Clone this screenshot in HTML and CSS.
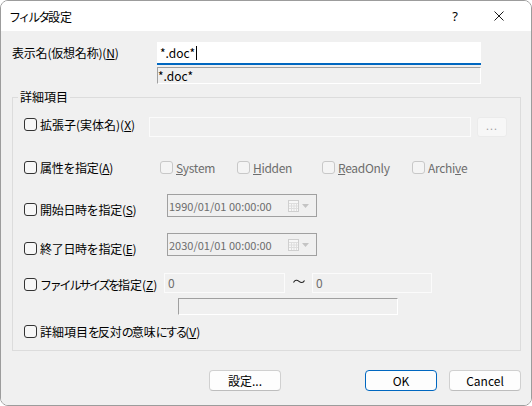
FILE: index.html
```html
<!DOCTYPE html>
<html lang="ja">
<head>
<meta charset="utf-8">
<title>フィルタ設定</title>
<link rel="stylesheet" href="styles.css">
</head>
<body>
<div class="win">
  <div class="titlebar">
    <span class="title"><span class="kana">フィルタ</span>設定</span>
    <span class="help">?</span>
    <span class="close"><svg width="10" height="10" viewBox="0 0 10 10"><path d="M0.5 0.5L9.5 9.5M9.5 0.5L0.5 9.5" stroke="#1a1a1a" stroke-width="1" fill="none"/></svg></span>
  </div>
  <div class="client">
    <div class="name-row">
      <div class="name-label">表示名(仮想名称)(<u>N</u>)</div>
      <div class="name-fields">
        <div class="name-input">*.doc*<span class="caret"></span></div>
        <div class="name-preview">*.doc*</div>
      </div>
    </div>

    <div class="group">
      <div class="legend">詳細項目</div>
      <div class="rows">
        <div class="row row1">
          <div class="cell c-ext"><span class="chk"><span class="box"></span><span>拡張子(実体名)(<u>X</u>)</span></span></div>
          <div class="field f-ext"></div>
          <div class="browse">...</div>
        </div>

        <div class="row row2">
          <div class="cell c-attr"><span class="chk"><span class="box"></span><span class="tight-s">属性を指定(<u>A</u>)</span></span></div>
          <span class="chk dis w-sys"><span class="box"></span><span><u>S</u>ystem</span></span>
          <span class="chk dis w-hid"><span class="box"></span><span><u>H</u>idden</span></span>
          <span class="chk dis w-ro"><span class="box"></span><span><u>R</u>eadOnly</span></span>
          <span class="chk dis"><span class="box"></span><span>Archi<u>v</u>e</span></span>
        </div>

        <div class="row row3">
          <div class="cell c-date"><span class="chk"><span class="box"></span><span class="tight-s">開始日時を指定(<u>S</u>)</span></span></div>
          <div class="date">
            <span class="date-text">1990/01/01 00:00:00</span>
            <svg class="cal" width="11" height="12" viewBox="0 0 11 12"><rect x="0.5" y="0.5" width="10" height="11" fill="#f7f7f7" stroke="#cfcfcf"/><path d="M1 3.5H10M1 6H10M1 8.5H10M3.5 4V11M6 4V11M8.5 4V11" stroke="#dedede" stroke-width="1"/></svg>
            <svg class="arr" width="7" height="4" viewBox="0 0 7 4"><path d="M0 0H7L3.5 4Z" fill="#c4c4c4"/></svg>
          </div>
        </div>

        <div class="row row4">
          <div class="cell c-date"><span class="chk"><span class="box"></span><span class="tight-s">終了日時を指定(<u>E</u>)</span></span></div>
          <div class="date">
            <span class="date-text">2030/01/01 00:00:00</span>
            <svg class="cal" width="11" height="12" viewBox="0 0 11 12"><rect x="0.5" y="0.5" width="10" height="11" fill="#f7f7f7" stroke="#cfcfcf"/><path d="M1 3.5H10M1 6H10M1 8.5H10M3.5 4V11M6 4V11M8.5 4V11" stroke="#dedede" stroke-width="1"/></svg>
            <svg class="arr" width="7" height="4" viewBox="0 0 7 4"><path d="M0 0H7L3.5 4Z" fill="#c4c4c4"/></svg>
          </div>
        </div>

        <div class="row row5">
          <div class="cell c-size"><span class="chk"><span class="box"></span><span><span class="kana">ファイルサイズを</span>指定(<u>Z</u>)</span></span></div>
          <div class="field f-size1">0</div>
          <div class="tilde"><svg width="12" height="5" viewBox="0 0 12 5"><path d="M0.5 3.5C2 0.8 4 0.6 6 2.3S10 4.2 11.5 1.5" stroke="#222" stroke-width="1.1" fill="none"/></svg></div>
          <div class="field f-size2">0</div>
        </div>
        <div class="row row5b">
          <div class="sunken"></div>
        </div>

        <div class="row row6">
          <span class="chk"><span class="box"></span><span>詳細項目<span class="kana">を</span>反対<span class="kana">の</span>意味<span class="kana">にする</span>(<u>V</u>)</span></span>
        </div>
      </div>
    </div>

    <div class="buttons">
      <div class="btn">設定...</div>
      <div class="btn btn-ok">OK</div>
      <div class="btn">Cancel</div>
    </div>
  </div>
</div>
</body>
</html>
```
FILE: styles.css
```css
html, body {
  margin: 0;
  padding: 0;
  background: #ffffff;
}
body {
  font-family: "Noto Sans CJK JP", "Noto Sans", sans-serif;
  font-size: 12px;
  color: #000;
}
u {
  text-decoration: underline;
  text-underline-offset: 1px;
}
.kana {
  letter-spacing: -2.2px;
}
.tight-s {
  letter-spacing: -0.3px;
}
.win {
  width: 532px;
  height: 406px;
  box-sizing: border-box;
  border: 1px solid #9c9c9c;
  border-radius: 8px;
  overflow: hidden;
  display: flex;
  flex-direction: column;
}
.titlebar {
  flex: none;
  height: 30px;
  background: #fff;
  display: flex;
  align-items: center;
}
.title {
  padding-left: 8px;
  font-size: 12px;
}
.help {
  margin-left: auto;
  width: 44px;
  text-align: center;
  font-family: "Noto Sans", sans-serif;
  font-size: 13px;
}
.close {
  width: 44px;
  margin-right: 10px;
  display: flex;
  justify-content: center;
}
.client {
  flex: 1;
  background: #f0f0f0;
  padding: 11px 10px 0 11px;
}
.name-row {
  display: flex;
}
.name-label {
  width: 145px;
  line-height: 21px;
  letter-spacing: -0.2px;
}
.name-fields {
  width: 324px;
}
.name-input {
  height: 23px;
  box-sizing: border-box;
  background: #fff;
  border-bottom: 2px solid #0067c0;
  padding-left: 3px;
  display: flex;
  align-items: center;
}
.caret {
  width: 1px;
  height: 14px;
  background: #000;
  margin-left: 1px;
}
.name-preview {
  margin-top: 2px;
  height: 17px;
  box-sizing: border-box;
  border-top: 1px solid #a0a0a0;
  border-left: 1px solid #a0a0a0;
  border-right: 1px solid #fff;
  border-bottom: 1px solid #fff;
  line-height: 15px;
}
.group {
  margin-top: 13px;
  border: 1px solid #dcdcdc;
  padding-bottom: 12px;
}
.legend {
  margin: -8px 0 0 5px;
  padding: 0 2px;
  width: max-content;
  height: 14px;
  line-height: 14px;
  background: #f0f0f0;
}
.rows {
  padding-left: 11px;
}
.row {
  display: flex;
  align-items: flex-start;
}
.cell {
  flex: none;
}
.chk {
  display: flex;
  align-items: center;
  gap: 3px;
  height: 13px;
  line-height: 13px;
  white-space: nowrap;
}
.box {
  flex: none;
  width: 13px;
  height: 13px;
  box-sizing: border-box;
  border: 1px solid #333;
  border-radius: 3px;
  background: #f7f7f7;
}
.chk.dis {
  color: #6d6d6d;
  letter-spacing: -0.3px;
}
.chk.dis .box {
  border-color: #c8c8c8;
  background: #f4f4f4;
}
.row1 {
  margin-top: 13px;
  height: 20px;
}
.row1 .cell {
  margin-top: 1px;
}
.c-ext { width: 125px; }
.field {
  box-sizing: border-box;
  height: 20px;
  border: 1px solid #fbfbfb;
  background: #f0f0f0;
  color: #6d6d6d;
  line-height: 18px;
  padding-left: 3px;
}
.f-ext { width: 322px; }
.browse {
  margin-left: 6px;
  width: 30px;
  height: 20px;
  box-sizing: border-box;
  border: 1px solid #ebebeb;
  border-radius: 3px;
  background: #f7f7f7;
  color: #a0a0a0;
  text-align: center;
  line-height: 16px;
  font-family: "Noto Sans", sans-serif;
  font-size: 11px;
  letter-spacing: 1px;
}
.row2 {
  margin-top: 24px;
  height: 13px;
}
.c-attr { width: 136px; }
.w-sys { width: 77px; }
.w-hid { width: 85px; }
.w-ro { width: 90px; }
.row3 {
  margin-top: 20px;
  height: 23px;
}
.row4 {
  margin-top: 16px;
  height: 23px;
}
.row3 .cell, .row4 .cell {
  margin-top: 9px;
}
.c-date { width: 143px; }
.date {
  width: 150px;
  height: 23px;
  box-sizing: border-box;
  border: 1px solid #a0a0a0;
  display: flex;
  align-items: center;
  padding-right: 7px;
  color: #6d6d6d;
}
.date-text {
  padding-left: 1px;
  font-size: 11px;
}
.cal {
  margin-left: auto;
  margin-top: 1px;
}
.arr {
  margin-left: 3px;
}
.row5 {
  margin-top: 17px;
  height: 20px;
}
.row5 .cell {
  margin-top: 5px;
}
.c-size { width: 140px; }
.f-size1 { width: 121px; }
.f-size2 { width: 120px; }
.tilde {
  width: 27px;
  height: 16px;
  display: flex;
  justify-content: center;
  align-items: center;
}
.row5b {
  margin-top: 5px;
  height: 17px;
}
.sunken {
  margin-left: 154px;
  width: 220px;
  height: 17px;
  box-sizing: border-box;
  border-top: 1px solid #a0a0a0;
  border-left: 1px solid #a0a0a0;
  border-right: 1px solid #fff;
  border-bottom: 1px solid #fff;
}
.row6 {
  margin-top: 10px;
  height: 13px;
}
.buttons {
  margin-top: 19px;
  padding-left: 197px;
  display: flex;
}
.btn {
  width: 72px;
  height: 21px;
  box-sizing: border-box;
  border: 1px solid #d0d0d0;
  border-bottom-color: #bdbdbd;
  border-radius: 4px;
  background: #fdfdfd;
  text-align: center;
  line-height: 19px;
}
.btn-ok {
  margin-left: 84px;
  border-color: #0067c0;
}
.btn-ok + .btn {
  margin-left: 12px;
}
```
